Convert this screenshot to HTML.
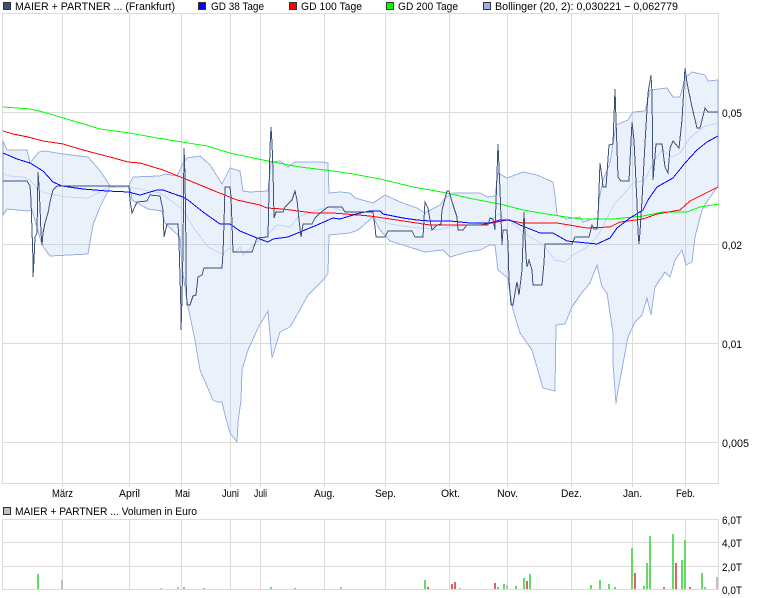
<!DOCTYPE html>
<html>
<head>
<meta charset="utf-8">
<style>
html,body{margin:0;padding:0;background:#fff;width:760px;height:598px;overflow:hidden}
svg{display:block}
text{font-family:"Liberation Sans",sans-serif;font-size:11px;fill:#000}
.g line{stroke:#dcdcdc;stroke-width:1}
polyline{fill:none;stroke-width:1}
</style>
</head>
<body>
<svg width="760" height="598" viewBox="0 0 760 598" xmlns="http://www.w3.org/2000/svg" shape-rendering="crispEdges">
<g class="g">
<line x1="2.5" y1="13" x2="2.5" y2="484"/>
<line x1="62.5" y1="13" x2="62.5" y2="487"/>
<line x1="129.5" y1="13" x2="129.5" y2="487"/>
<line x1="181.5" y1="13" x2="181.5" y2="487"/>
<line x1="230.5" y1="13" x2="230.5" y2="487"/>
<line x1="260.5" y1="13" x2="260.5" y2="487"/>
<line x1="324.5" y1="13" x2="324.5" y2="487"/>
<line x1="385.5" y1="13" x2="385.5" y2="487"/>
<line x1="449.5" y1="13" x2="449.5" y2="487"/>
<line x1="507.5" y1="13" x2="507.5" y2="487"/>
<line x1="571.5" y1="13" x2="571.5" y2="487"/>
<line x1="632.5" y1="13" x2="632.5" y2="487"/>
<line x1="685.5" y1="13" x2="685.5" y2="487"/>
<line x1="718.5" y1="13" x2="718.5" y2="484"/>
<line x1="2" y1="13.5" x2="719" y2="13.5"/>
<line x1="2" y1="112.5" x2="719" y2="112.5"/>
<line x1="2" y1="244.5" x2="719" y2="244.5"/>
<line x1="2" y1="343.5" x2="719" y2="343.5"/>
<line x1="2" y1="442.5" x2="719" y2="442.5"/>
<line x1="2" y1="483.5" x2="719" y2="483.5"/>
<line x1="2.5" y1="519" x2="2.5" y2="590"/>
<line x1="62.5" y1="519" x2="62.5" y2="590"/>
<line x1="129.5" y1="519" x2="129.5" y2="590"/>
<line x1="181.5" y1="519" x2="181.5" y2="590"/>
<line x1="230.5" y1="519" x2="230.5" y2="590"/>
<line x1="260.5" y1="519" x2="260.5" y2="590"/>
<line x1="324.5" y1="519" x2="324.5" y2="590"/>
<line x1="385.5" y1="519" x2="385.5" y2="590"/>
<line x1="449.5" y1="519" x2="449.5" y2="590"/>
<line x1="507.5" y1="519" x2="507.5" y2="590"/>
<line x1="571.5" y1="519" x2="571.5" y2="590"/>
<line x1="632.5" y1="519" x2="632.5" y2="590"/>
<line x1="685.5" y1="519" x2="685.5" y2="590"/>
<line x1="718.5" y1="519" x2="718.5" y2="590"/>
<line x1="2" y1="519.5" x2="719" y2="519.5"/>
<line x1="2" y1="542.5" x2="719" y2="542.5"/>
<line x1="2" y1="566.5" x2="719" y2="566.5"/>
<line x1="2" y1="589.5" x2="719" y2="589.5"/>
</g>

<polygon fill="rgba(150,185,235,0.2)" stroke="#98b0e2" stroke-width="1" points="3,141 7,150 27,150 30,163 39,152 45,151 63,154 88,157 97,167 103,175 110,186 129,186 130,183 133,177 160,176 165,174 177,176 183,163 187,158 200,156 210,165 222,184 230,168 240,171 243,191 250,192 268,191 271,162 280,161 288,167 295,162 323,162 328,163 329,193 340,192 350,193 355,198 373,203 385,195 400,202 417,208 425,213 440,205 445,198 453,193 480,193 487,197 495,196 498,173 507,178 523,172 537,175 553,182 555,195 557,215 567,219 580,217 583,222 592,219 598,218 599,200 603,180 610,163 613,143 616,125 628,120 633,112 645,111 650,90 667,88 673,97 680,97 685,78 692,72 705,75 708,81 718,80 718,186 708,200 702,210 695,237 692,262 686,265 682,250 675,260 670,277 665,272 655,287 651,315 647,298 642,315 635,322 628,337 618,390 616,404 613,363 613,333 607,293 602,287 597,265 590,283 580,295 572,307 565,324 556,325 555,391 543,388 532,350 520,333 513,310 509,287 508,278 498,270 495,245 490,245 480,250 467,252 450,257 443,250 425,252 390,241 380,230 373,217 358,230 350,233 329,235 328,273 325,278 308,295 297,315 290,327 280,332 272,358 268,311 258,328 248,350 242,370 241,400 238,422 237,442 230,433 225,415 222,402 217,402 213,400 200,370 195,340 188,307 182,267 180,237 165,223 162,211 148,209 137,203 132,200 130,187 110,187 100,207 93,225 90,242 88,254 50,256 42,245 32,210 28,211 7,209 3,215"/>

<polyline stroke="#c2d6f8" points="3,173 8,176 23,177 30,180 37,188 45,193 67,197 88,198 100,192 110,186 129,187 150,191 160,193 173,202 183,210 193,227 208,247 222,254 230,248 235,252 240,247 243,255 257,242 267,235 277,225 290,227 298,217 317,210 330,207 353,213 370,217 380,220 390,224 410,227 423,228 437,230 450,227 470,225 487,223 498,214 510,221 523,232 543,245 555,260 565,262 573,255 587,247 597,237 615,203 623,195 633,183 645,180 653,163 662,150 672,157 680,153 690,138 703,127 718,123"/>

<polyline stroke="#00ff00" points="3,107 17,108 30,109 43,112 60,117 77,122 100,129 130,133 157,138 182,142 207,146 230,153 253,158 273,162 300,167 333,171 353,174 380,179 413,187 447,193 473,199 500,204 523,210 553,215 580,219 613,219 643,216 663,212 687,212 700,207 719,204"/>

<polyline stroke="#ff0000" points="3,131 13,134 28,137 43,141 63,144 83,150 110,157 128,162 140,163 163,170 183,178 200,185 217,192 237,200 260,205 267,208 283,209 313,213 333,213 370,216 390,219 410,222 430,225 457,225 480,225 497,222 507,220 523,223 557,223 587,228 610,227 620,222 643,219 657,214 680,210 690,201 718,187"/>

<polyline stroke="#0000ff" points="3,153 17,159 30,163 43,171 53,182 62,186 83,189 107,191 129,192 132,193 140,195 157,190 163,190 177,195 183,197 188,200 203,212 220,224 230,224 240,231 257,238 268,242 273,239 288,237 300,232 317,225 333,218 340,219 360,213 370,211 380,211 383,214 403,218 417,220 430,221 450,221 470,223 490,223 500,220 510,220 520,225 540,233 553,233 567,241 597,244 610,238 617,228 630,218 643,210 648,200 657,187 673,178 685,163 697,150 707,142 718,136"/>

<polyline stroke="#3e5078" points="3,181 27,181 30,186 31,200 32,230 33,260 33,277 34,260 35,237 37,233 38,172 39,185 40,207 41,233 42,245 43,233 45,223 48,213 50,202 53,190 57,186 129,186 130,200 132,213 137,202 147,201 150,195 160,196 163,210 164,237 167,224 178,224 179,242 181,312 181,330 182,298 183,250 184,148 185,175 186,250 186,280 187,305 190,305 193,296 196,295 198,277 202,275 204,268 222,268 223,253 224,223 225,187 230,187 231,197 232,223 233,252 252,252 257,238 268,237 270,147 271,127 272,143 273,170 274,218 276,212 283,212 285,207 292,200 295,191 297,200 299,220 301,237 303,224 312,224 315,218 320,213 328,207 342,207 345,212 373,212 375,227 376,237 385,237 388,231 412,231 415,237 423,237 425,202 428,208 430,220 432,230 437,225 441,224 442,210 447,191 449,191 453,205 457,217 458,230 463,230 467,225 488,225 490,218 493,219 495,230 496,203 498,144 499,167 500,190 502,245 503,230 507,230 508,243 509,280 511,305 513,305 516,287 517,282 519,295 522,270 524,212 526,257 527,267 529,260 532,270 533,285 542,285 544,263 545,244 572,244 575,237 589,237 592,225 594,229 597,229 598,217 600,163 602,177 603,187 606,187 609,145 613,144 615,89 616,120 618,177 621,181 629,181 632,122 634,140 637,203 638,232 639,244 640,232 642,200 645,143 648,93 651,75 652,93 653,180 656,144 662,144 665,167 668,173 670,148 673,141 679,148 682,120 685,68 687,83 692,107 697,128 700,128 705,108 708,112 718,112"/>

<g fill="#64dc64">
<rect x="37" y="574" width="2" height="15"/><rect x="183" y="587" width="2" height="2"/><rect x="203" y="588" width="2" height="1"/><rect x="270" y="587" width="2" height="2"/><rect x="294" y="588" width="2" height="1"/>
<rect x="424" y="580" width="2" height="9"/><rect x="497" y="587" width="2" height="2"/><rect x="503" y="584" width="2" height="5"/><rect x="515" y="586" width="2" height="3"/><rect x="523" y="578" width="2" height="11"/><rect x="529" y="574" width="2" height="15"/>
<rect x="590" y="585" width="2" height="4"/><rect x="599" y="580" width="2" height="9"/><rect x="608" y="584" width="2" height="5"/><rect x="614" y="587" width="2" height="2"/><rect x="631" y="548" width="2" height="41"/><rect x="643" y="586" width="2" height="3"/><rect x="646" y="563" width="2" height="26"/><rect x="649" y="536" width="2" height="53"/><rect x="672" y="534" width="2" height="55"/><rect x="681" y="560" width="2" height="29"/><rect x="684" y="540" width="2" height="49"/><rect x="701" y="573" width="2" height="16"/><rect x="704" y="587" width="2" height="2"/>
</g>
<g fill="#dc6464">
<rect x="427" y="587" width="2" height="2"/><rect x="451" y="584" width="2" height="5"/><rect x="454" y="582" width="2" height="7"/><rect x="494" y="583" width="2" height="6"/><rect x="526" y="581" width="2" height="8"/><rect x="634" y="573" width="2" height="16"/><rect x="663" y="587" width="2" height="2"/><rect x="675" y="563" width="2" height="26"/><rect x="689" y="587" width="2" height="2"/>
</g>
<g fill="#c0c0c0">
<rect x="61" y="580" width="2" height="9"/><rect x="160" y="588" width="2" height="1"/><rect x="177" y="587" width="2" height="2"/><rect x="340" y="587" width="2" height="2"/><rect x="459" y="588" width="2" height="1"/><rect x="506" y="585" width="2" height="4"/><rect x="716" y="577" width="2" height="12"/>
</g>

<rect x="3.5" y="2.5" width="7" height="7" fill="#3e5078" stroke="#333"/>
<rect x="198.5" y="2.5" width="7" height="7" fill="#0000ff" stroke="#333"/>
<rect x="289.5" y="2.5" width="7" height="7" fill="#ff0000" stroke="#333"/>
<rect x="386.5" y="2.5" width="7" height="7" fill="#00ff00" stroke="#333"/>
<rect x="483.5" y="2.5" width="7" height="7" fill="#98b0e2" stroke="#333"/>
<rect x="3.5" y="507.5" width="7" height="7" fill="#c0c0c0" stroke="#333"/>

<g shape-rendering="auto">
<text x="15" y="10" textLength="160" lengthAdjust="spacingAndGlyphs">MAIER + PARTNER ... (Frankfurt)</text>
<text x="211" y="10" textLength="53" lengthAdjust="spacingAndGlyphs">GD 38 Tage</text>
<text x="301" y="10" textLength="61" lengthAdjust="spacingAndGlyphs">GD 100 Tage</text>
<text x="398" y="10" textLength="60" lengthAdjust="spacingAndGlyphs">GD 200 Tage</text>
<text x="495" y="10" textLength="183" lengthAdjust="spacingAndGlyphs">Bollinger (20, 2): 0,030221 − 0,062779</text>
<text x="15" y="515" textLength="182" lengthAdjust="spacingAndGlyphs">MAIER + PARTNER ... Volumen in Euro</text>

<text x="52" y="497" textLength="21" lengthAdjust="spacingAndGlyphs">März</text>
<text x="119" y="497" textLength="21" lengthAdjust="spacingAndGlyphs">April</text>
<text x="175" y="497" textLength="15" lengthAdjust="spacingAndGlyphs">Mai</text>
<text x="222" y="497" textLength="17" lengthAdjust="spacingAndGlyphs">Juni</text>
<text x="254" y="497" textLength="13" lengthAdjust="spacingAndGlyphs">Juli</text>
<text x="314" y="497" textLength="21" lengthAdjust="spacingAndGlyphs">Aug.</text>
<text x="375" y="497" textLength="21" lengthAdjust="spacingAndGlyphs">Sep.</text>
<text x="441" y="497" textLength="19" lengthAdjust="spacingAndGlyphs">Okt.</text>
<text x="497" y="497" textLength="21" lengthAdjust="spacingAndGlyphs">Nov.</text>
<text x="561" y="497" textLength="21" lengthAdjust="spacingAndGlyphs">Dez.</text>
<text x="623" y="497" textLength="19" lengthAdjust="spacingAndGlyphs">Jan.</text>
<text x="676" y="497" textLength="19" lengthAdjust="spacingAndGlyphs">Feb.</text>

<text x="722" y="117" textLength="20" lengthAdjust="spacingAndGlyphs">0,05</text>
<text x="722" y="249" textLength="20" lengthAdjust="spacingAndGlyphs">0,02</text>
<text x="722" y="348" textLength="20" lengthAdjust="spacingAndGlyphs">0,01</text>
<text x="722" y="447" textLength="27" lengthAdjust="spacingAndGlyphs">0,005</text>
<text x="722" y="524" textLength="20" lengthAdjust="spacingAndGlyphs">6,0T</text>
<text x="722" y="547" textLength="20" lengthAdjust="spacingAndGlyphs">4,0T</text>
<text x="722" y="571" textLength="20" lengthAdjust="spacingAndGlyphs">2,0T</text>
<text x="722" y="594" textLength="20" lengthAdjust="spacingAndGlyphs">0,0T</text>
</g>
</svg>
</body>
</html>
